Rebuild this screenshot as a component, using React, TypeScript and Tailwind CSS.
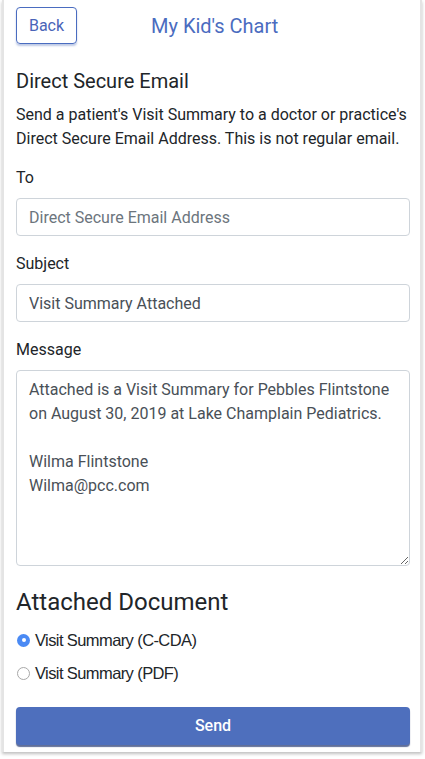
export default function App() {
    return (
        <div className="min-h-[759px] bg-white font-['Roboto','Liberation_Sans',sans-serif] text-[#212529]">
            <div className="ml-[2px] w-[420px] h-[752px] border-x-2 border-[#e4e4e4] bg-white pl-[12px] pr-[10px] shadow-[0_2px_3px_rgba(0,0,0,0.25)]">
                {/* header */}
                <div className="relative flex items-center pt-[7px]">
                    <button className="h-[37px] w-[61px] rounded-[4px] border border-[#4a6cc0] text-[16px] text-[#4a64b8] shadow-[0_2px_2px_rgba(70,100,180,0.35)]">
                        Back
                    </button>
                    <h1 className="absolute left-[135px] top-[14px] text-[20px] leading-[24px] text-[#4b6cc0]">
                        My Kid's Chart
                    </h1>
                </div>

                <h2 className="mt-[25px] text-[20px] leading-[24px]">
                    Direct Secure Email
                </h2>
                <p className="mt-[10px] whitespace-nowrap text-[16px] leading-[24px]">
                    Send a patient's Visit Summary to a doctor or practice's
                    <br />
                    Direct Secure Email Address. This is not regular email.
                </p>

                <label className="mt-[15px] block text-[16px] leading-[24px]">To</label>
                <input
                    className="mt-[8px] block h-[38px] w-full rounded-[4px] border border-[#ced4da] px-[12px] text-[16px] placeholder:text-[#6c757d] outline-none"
                    placeholder="Direct Secure Email Address"
                />

                <label className="mt-[16px] block text-[16px] leading-[24px]">Subject</label>
                <input
                    className="mt-[8px] block h-[38px] w-full rounded-[4px] border border-[#ced4da] px-[12px] text-[16px] text-[#495057] outline-none"
                    defaultValue="Visit Summary Attached"
                />

                <label className="mt-[16px] block text-[16px] leading-[24px]">Message</label>
                <textarea
                    className="mt-[8px] block h-[196px] w-full rounded-[4px] border border-[#ced4da] px-[12px] py-[7px] text-[16px] leading-[24px] text-[#495057] outline-none"
                    defaultValue={"Attached is a Visit Summary for Pebbles Flintstone on August 30, 2019 at Lake Champlain Pediatrics.\n\nWilma Flintstone\nWilma@pcc.com"}
                />

                <h2 className="mt-[22px] text-[24px] leading-[29px]">
                    Attached Document
                </h2>

                <div className="mt-[11px] flex flex-col gap-[9px] font-['Liberation_Sans',sans-serif] text-[16.5px] tracking-[-0.6px]">
                    <label className="flex items-center gap-[5px] leading-[24px]">
                        <span className="ml-[1px] flex h-[13px] w-[13px] items-center justify-center rounded-full bg-[#4a8af4]">
                            <span className="h-[4px] w-[4px] rounded-full bg-white" />
                        </span>
                        Visit Summary (C-CDA)
                    </label>
                    <label className="flex items-center gap-[5px] leading-[24px]">
                        <span className="ml-[1px] h-[13px] w-[13px] rounded-full border border-[#a8a8a8] bg-white" />
                        Visit Summary (PDF)
                    </label>
                </div>

                <button className="mt-[22px] h-[38px] w-full rounded-[4px] bg-[#4e6fbd] text-[16px] font-medium text-white shadow-[0_2px_1px_rgba(30,50,110,0.7)]">
                    Send
                </button>
            </div>
        </div>
    );
}
